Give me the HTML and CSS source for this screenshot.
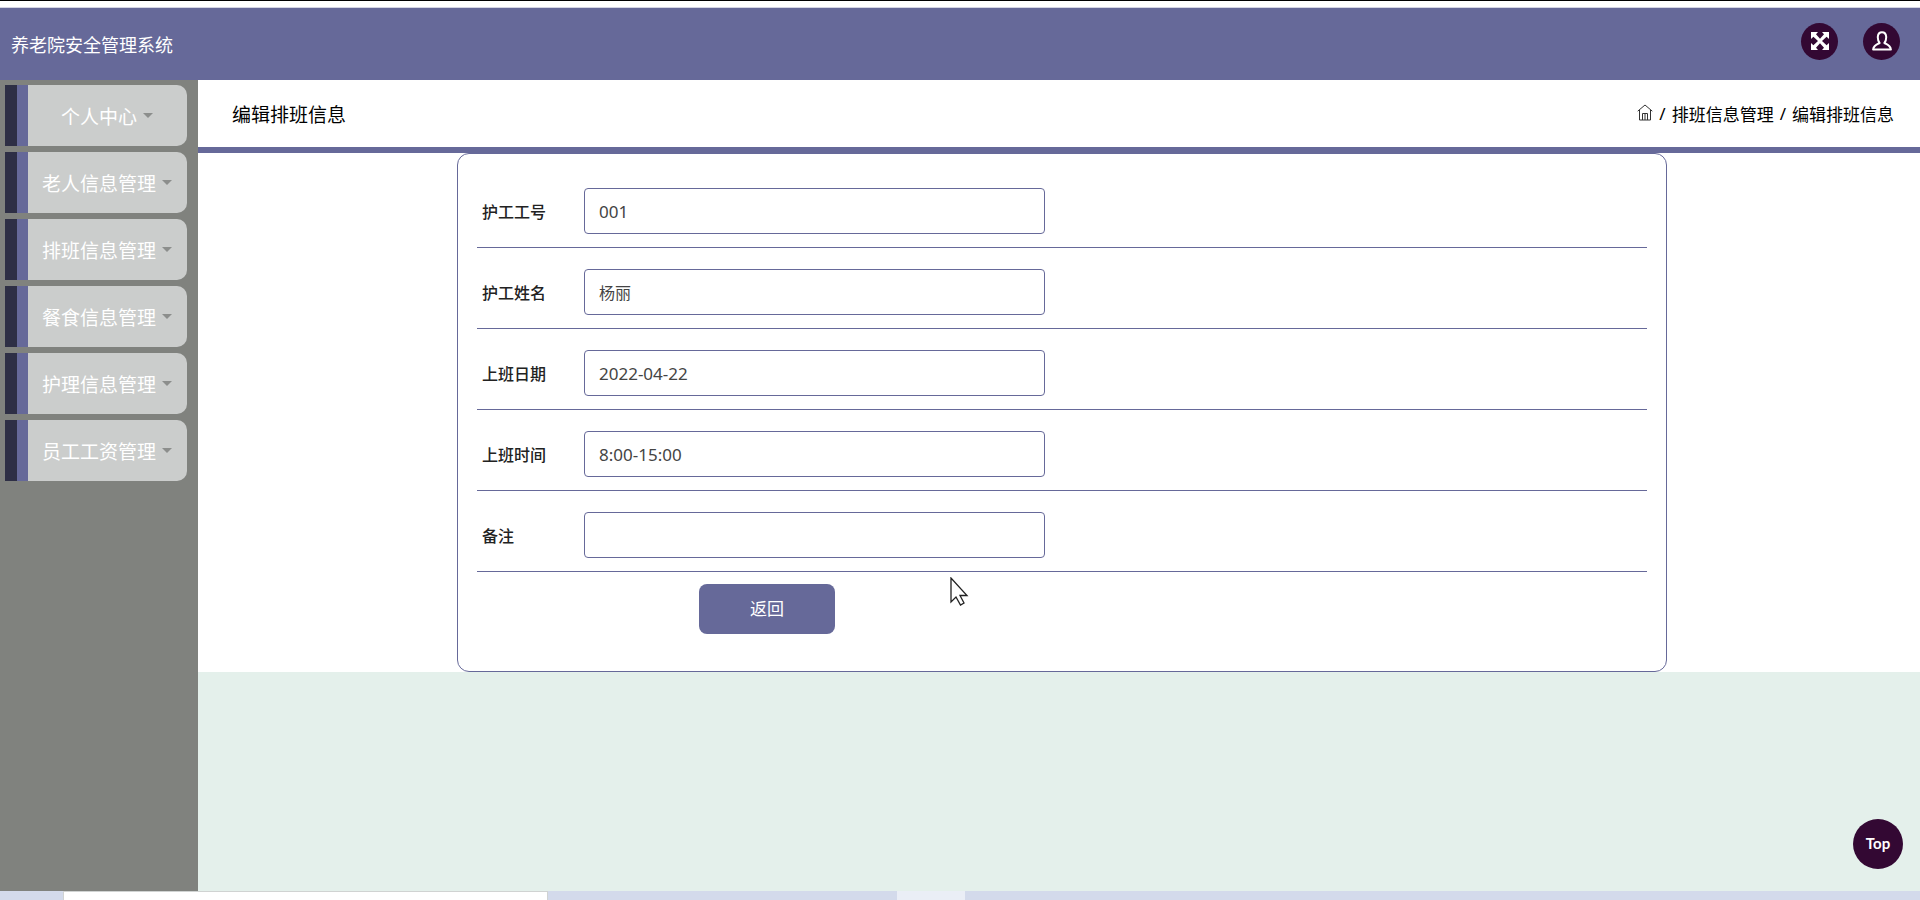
FILE: index.html
```html
<!DOCTYPE html>
<html lang="zh-CN">
<head>
<meta charset="utf-8">
<title>养老院安全管理系统</title>
<link rel="stylesheet" href="styles.css">
</head>
<body>
<div class="window-edge"></div>
<header class="topbar">
  <div class="brand">养老院安全管理系统</div>
  <div class="actions">
    <button class="round" type="button" aria-label="全屏">
      <svg width="18" height="18" viewBox="0 0 18 18" fill="#fff"><path d="M0 0h7L5 2.200l4 4.600 4-4.600L11 0h7v7l-2.400-2.300L11 9l4.600 4.300L18 11v7h-7l2-2.200-4-4.600-4 4.600L7 18H0v-7l2.400 2.300L7 9 2.400 4.700 0 7z"/></svg>
    </button>
    <button class="round" type="button" aria-label="用户">
      <svg width="20" height="20" viewBox="0 0 20 20" fill="none" stroke="#fff" stroke-width="2" stroke-linejoin="round"><path d="M7.600 12C5.400 9.500 4.300 1.200 10 1.200s4.600 8.300 2.400 10.800c2.400 1.200 6 2.200 6.500 6.500H1.100c.5-4.300 4.100-5.300 6.500-6.500z"/></svg>
    </button>
  </div>
</header>
<div class="shell">
  <nav class="sidebar">
    <button class="menu-item" type="button">个人中心<span class="caret"></span></button>
    <button class="menu-item" type="button">老人信息管理<span class="caret"></span></button>
    <button class="menu-item" type="button">排班信息管理<span class="caret"></span></button>
    <button class="menu-item" type="button">餐食信息管理<span class="caret"></span></button>
    <button class="menu-item" type="button">护理信息管理<span class="caret"></span></button>
    <button class="menu-item" type="button">员工工资管理<span class="caret"></span></button>
  </nav>
  <main class="main">
    <div class="page-head">
      <h1 class="page-title">编辑排班信息</h1>
      <div class="crumbs">
        <a href="#" class="home" aria-label="首页"><svg width="16" height="17" viewBox="0 0 16 17" fill="none" stroke="#333"><path d="M.7 7.200 8 1l7.300 6.200M2.500 6v10h11V6M5.500 16V9.500h5V16M8 10v6"/></svg></a>
        <span>/</span><a href="#">排班信息管理</a><span>/</span><span>编辑排班信息</span>
      </div>
    </div>
    <div class="content">
      <form class="card">
        <div class="row"><label for="no">护工工号</label><input class="numeric" id="no" type="text" value="001"></div>
        <div class="row"><label for="name">护工姓名</label><input id="name" type="text" value="杨丽"></div>
        <div class="row"><label for="date">上班日期</label><input class="numeric" id="date" type="text" value="2022-04-22"></div>
        <div class="row"><label for="time">上班时间</label><input class="numeric" id="time" type="text" value="8:00-15:00"></div>
        <div class="row"><label for="note">备注</label><input id="note" type="text"></div>
        <button class="back" type="button">返回</button>
      </form>
    </div>
  </main>
</div>
<div class="taskbar"><div class="task-search"></div><div class="task-active"></div></div>
<button class="to-top" type="button">Top</button>
<svg class="pointer" width="19" height="29" viewBox="0 0 19 29" fill="#fff" stroke="#222" stroke-width="1.300"><path d="M1 1v24l5-5 4.500 8 3.500-2-4-7.500h7z"/></svg>
</body>
</html>
```
FILE: styles.css
```css
* { box-sizing: border-box; }
body {
  margin: 0;
  min-height: 100vh;
  display: flex;
  flex-direction: column;
  font-family: "Noto Sans", "Noto Sans CJK SC", sans-serif;
  font-size: 16px;
  color: #333;
  background: #fff;
}
button, input { font-family: inherit; }
button { border: 0; padding: 0; cursor: pointer; }
a { color: inherit; text-decoration: none; }
.window-edge {
  height: 8px;
  border-top: 1px solid #000;
  border-bottom: 1px solid #d4d5e3;
}
.topbar {
  height: 72px;
  padding: 0 20px 0 11px;
  display: flex;
  align-items: center;
  justify-content: space-between;
  background: #666999;
}
.brand { color: #fff; font-size: 18px; }
.actions { display: flex; gap: 25px; padding-bottom: 6px; }
.round {
  width: 37px;
  height: 37px;
  border-radius: 50%;
  background: #330833;
  display: flex;
  align-items: center;
  justify-content: center;
}
.shell { flex: 1; display: flex; }
.sidebar {
  width: 198px;
  padding: 5px 11px 0 5px;
  background: #80827e;
  display: flex;
  flex-direction: column;
  gap: 6px;
}
.menu-item {
  height: 61px;
  border-left: 12px solid #2e2f45;
  border-radius: 0 10px 10px 0;
  padding-left: 10px;
  background: linear-gradient(to right, #666999 11px, #cbcdcc 11px);
  color: #fff;
  font-size: 19px;
  display: flex;
  align-items: center;
  justify-content: center;
  gap: 6px;
}
.caret {
  border: 5px solid transparent;
  border-top-color: #8c8e8c;
  border-bottom: 0;
}
.main { flex: 1; min-width: 0; background: #e4f0eb; }
.page-head {
  height: 73px;
  padding: 0 26px 0 34px;
  background: #fff;
  border-bottom: 6px solid #666999;
  display: flex;
  align-items: center;
  justify-content: space-between;
  color: #000;
}
.page-title { margin: 0; font-size: 19px; font-weight: 400; }
.crumbs { display: flex; align-items: center; gap: 6px; font-size: 17px; }
.home { display: flex; padding-bottom: 3px; }
.content { background: #fff; padding: 0 253px 0 259px; }
.card {
  border: 1px solid #666999;
  border-radius: 12px;
  padding: 13px 19px 37px;
}
.row {
  padding: 21px 5px 13px;
  border-bottom: 1px solid #666999;
  display: flex;
  align-items: center;
}
.row label { width: 102px; font-weight: 500; color: #222; font-family: "Noto Sans CJK SC", sans-serif; }
.row input {
  width: 461px;
  height: 46px;
  padding: 0 14px;
  border: 1px solid #666999;
  border-radius: 4px;
  background: #fff;
  color: #444;
  font-size: 16px;
}
.row .numeric { font-size: 17px; }
.back {
  display: block;
  width: 136px;
  height: 50px;
  margin: 12px 0 0 222px;
  padding-bottom: 3px;
  border-radius: 8px;
  background: #666999;
  color: #fff;
  font-size: 17px;
}
.taskbar { height: 9px; display: flex; background: #d3daeb; padding-left: 63px; }
.task-search { width: 485px; background: #fff; border: 1px solid #d0d3d2; border-bottom: 0; }
.task-active { width: 68px; margin-left: 349px; background: #eaeef6; }
.to-top {
  position: fixed;
  right: 17px;
  bottom: 31px;
  width: 50px;
  height: 50px;
  padding-bottom: 3px;
  border-radius: 50%;
  background: #330833;
  color: #fff;
  font-family: Lato, sans-serif;
  font-size: 15px;
  font-weight: 700;
}
.pointer { position: absolute; left: 950px; top: 577px; }
```
